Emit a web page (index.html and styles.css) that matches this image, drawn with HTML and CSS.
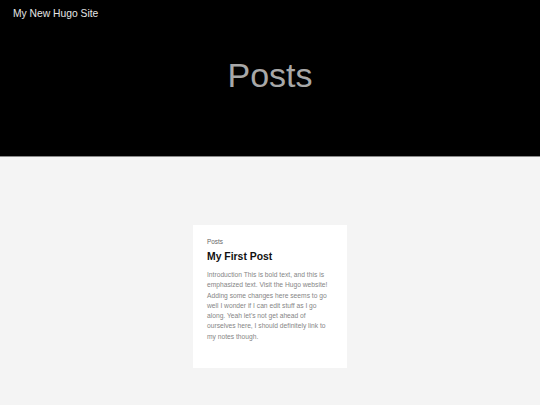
FILE: index.html
```html
<!DOCTYPE html>
<html lang="en">
<head>
<meta charset="utf-8">
<title>Posts | My New Hugo Site</title>
<link rel="stylesheet" href="styles.css">
</head>
<body>
<header class="hero">
  <nav class="topbar"><a class="brand" href="#">My New Hugo Site</a></nav>
  <h1 class="hero-title">Posts</h1>
</header>
<main class="content">
  <article class="card">
    <div class="card-section">Posts</div>
    <h2 class="card-title">My First Post</h2>
    <p class="card-summary">Introduction This is bold text, and this is emphasized text. Visit the Hugo website! Adding some changes here seems to go well I wonder if I can edit stuff as I go along. Yeah let's not get ahead of ourselves here, I should definitely link to my notes though.</p>
  </article>
</main>
</body>
</html>
```

FILE: styles.css
```css
html, body {
  margin: 0;
  padding: 0;
}
body {
  font-family: "Liberation Sans", Arial, sans-serif;
  background: #f4f4f4;
  width: 540px;
  height: 405px;
  overflow: hidden;
}
.hero {
  background: #000;
  height: 157px;
  border-bottom: 1px solid #8a8a8a;
  box-sizing: border-box;
  display: flex;
  flex-direction: column;
}
.topbar {
  padding: 5px 13px 0;
  line-height: 14px;
}
.brand {
  color: #e6e6e6;
  text-decoration: none;
  font-size: 10.3px;
}
.hero-title {
  margin: 0;
  padding-top: 34px;
  text-align: center;
  color: #a8a8a8;
  font-weight: normal;
  font-size: 34px;
  line-height: 40px;
}
.content {
  display: flex;
  justify-content: center;
  padding-top: 68px;
}
.card {
  background: #fff;
  width: 154px;
  height: 143px;
  box-sizing: border-box;
  padding: 13px 14px 0;
}
.card-section {
  font-size: 6.4px;
  color: #666;
  line-height: 8px;
}
.card-title {
  margin: 4px 0 6px;
  font-size: 10.4px;
  line-height: 14px;
  font-weight: bold;
  color: #111;
}
.card-summary {
  margin: 0;
  font-size: 6.7px;
  line-height: 10.3px;
  color: #858585;
}
```
